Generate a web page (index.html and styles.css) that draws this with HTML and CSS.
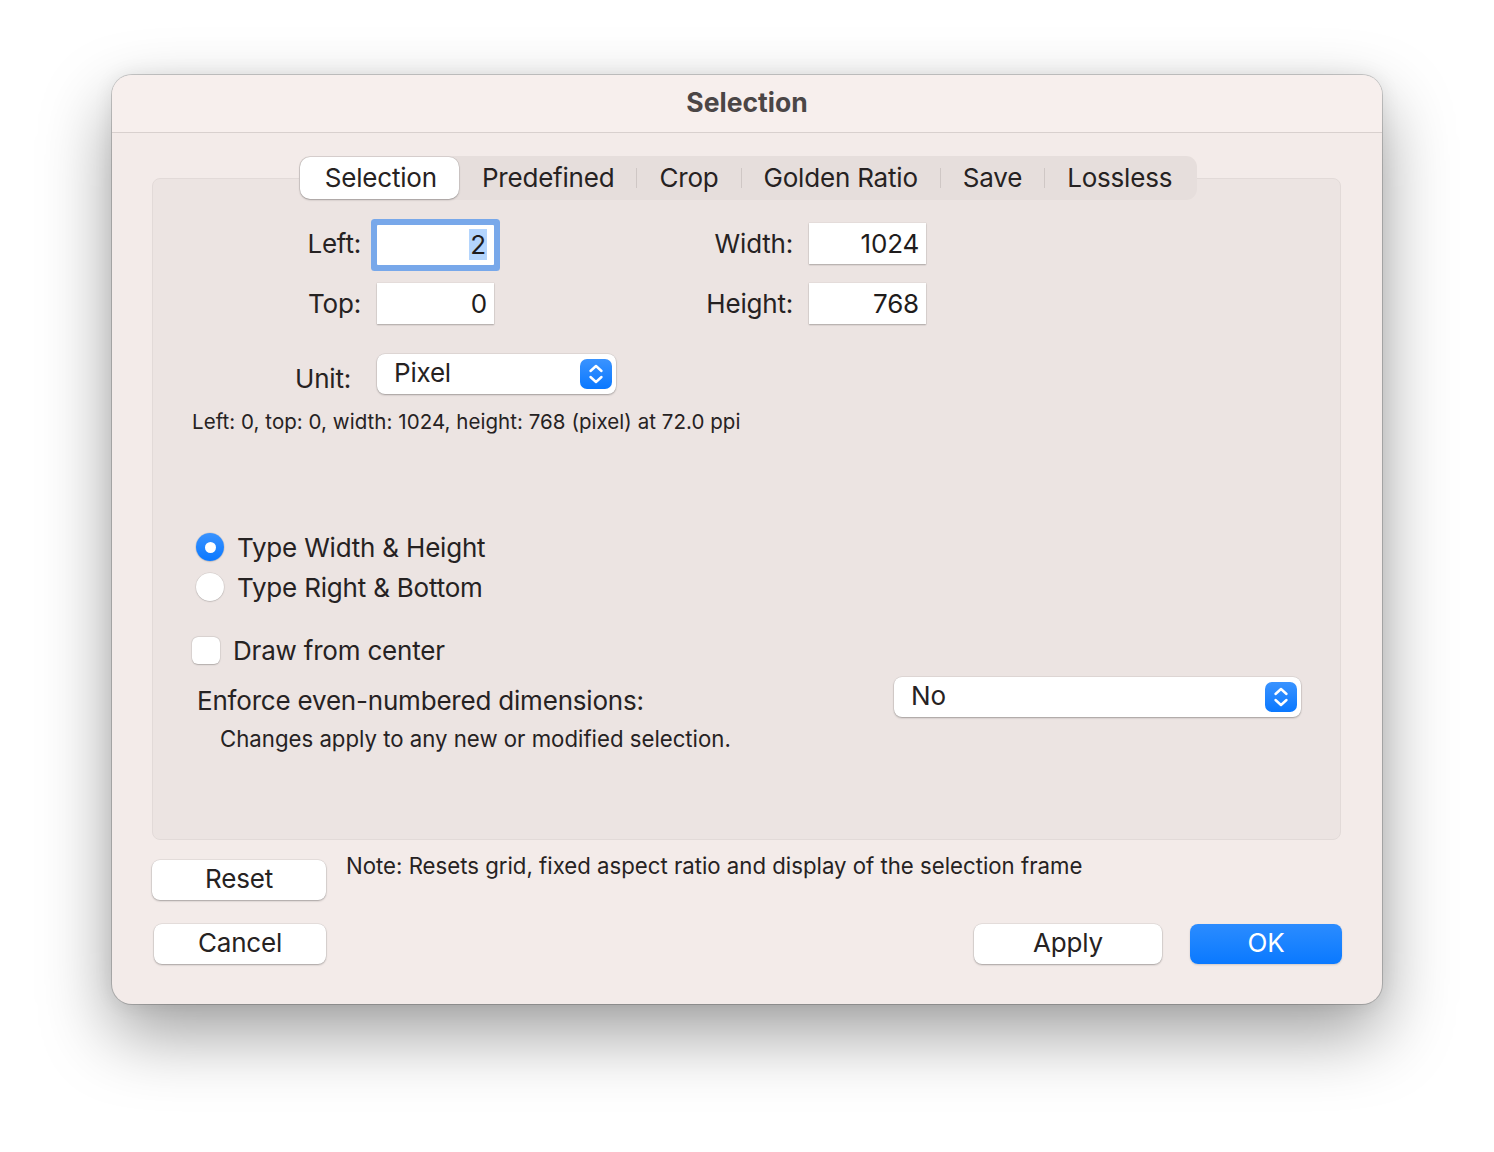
FILE: index.html
```html
<!DOCTYPE html>
<html>
<head>
<meta charset="utf-8">
<title>Selection</title>
<link rel="stylesheet" href="styles.css">
</head>
<body>
<div class="window">
  <div class="titlebar">Selection</div>
  <div class="content">
    <div class="tabs-row">
      <div class="tabs">
        <div class="tab active">Selection</div>
        <div class="tab">Predefined</div>
        <div class="sep"></div>
        <div class="tab">Crop</div>
        <div class="sep"></div>
        <div class="tab">Golden Ratio</div>
        <div class="sep"></div>
        <div class="tab">Save</div>
        <div class="sep"></div>
        <div class="tab">Lossless</div>
      </div>
    </div>
    <div class="groupbox">
      <div class="fields">
        <div class="lbl">Left:</div>
        <div class="field focused"><span class="sel">2</span></div>
        <div class="lbl">Width:</div>
        <div class="field">1024</div>
        <div class="lbl">Top:</div>
        <div class="field">0</div>
        <div class="lbl">Height:</div>
        <div class="field">768</div>
      </div>
      <div class="unit-row">
        <div class="unit-lbl">Unit:</div>
        <div class="popup unit-popup">
          <span class="popup-text">Pixel</span>
          <span class="stepper"><svg width="32" height="30" viewBox="0 0 32 30"><path d="M10.5 12 L16 7 L21.5 12" fill="none" stroke="#fff" stroke-width="2.4" stroke-linecap="round" stroke-linejoin="round"/><path d="M10.5 18 L16 23 L21.5 18" fill="none" stroke="#fff" stroke-width="2.4" stroke-linecap="round" stroke-linejoin="round"/></svg></span>
        </div>
      </div>
      <div class="info">Left: 0, top: 0, width: 1024, height: 768 (pixel) at 72.0 ppi</div>
      <div class="radios">
        <div class="radio-row"><span class="radio on"></span><span>Type Width &amp; Height</span></div>
        <div class="radio-row"><span class="radio"></span><span>Type Right &amp; Bottom</span></div>
      </div>
      <div class="check-row"><span class="checkbox"></span><span>Draw from center</span></div>
      <div class="enforce-row">
        <div class="enforce-lbl">Enforce even-numbered dimensions:</div>
        <div class="popup no-popup">
          <span class="popup-text">No</span>
          <span class="stepper"><svg width="32" height="30" viewBox="0 0 32 30"><path d="M10.5 12 L16 7 L21.5 12" fill="none" stroke="#fff" stroke-width="2.4" stroke-linecap="round" stroke-linejoin="round"/><path d="M10.5 18 L16 23 L21.5 18" fill="none" stroke="#fff" stroke-width="2.4" stroke-linecap="round" stroke-linejoin="round"/></svg></span>
        </div>
      </div>
      <div class="changes">Changes apply to any new or modified selection.</div>
    </div>
    <div class="reset-row">
      <button class="btn reset">Reset</button>
      <div class="note">Note: Resets grid, fixed aspect ratio and display of the selection frame</div>
    </div>
    <div class="action-row">
      <button class="btn cancel">Cancel</button>
      <div class="spacer"></div>
      <button class="btn apply">Apply</button>
      <button class="btn ok">OK</button>
    </div>
  </div>
</div>
</body>
</html>
```

FILE: styles.css
```css
* { box-sizing: border-box; }

body {
  margin: 0;
  background: #ffffff;
  font-family: Inter, "Noto Sans", "Liberation Sans", sans-serif;
  font-size: 26px;
  letter-spacing: -0.2px;
  color: #262222;
  width: 1494px;
  height: 1152px;
  overflow: hidden;
}

.window {
  margin: 75px 0 0 112px;
  width: 1270px;
  height: 929px;
  border-radius: 20px;
  background: #f3ebe9;
  box-shadow: 0 0 0 1px rgba(0, 0, 0, 0.18), 0 30px 70px rgba(0, 0, 0, 0.38), 0 0 20px rgba(0,0,0,0.08);
  overflow: hidden;
}

.titlebar {
  height: 58px;
  background: #f7efed;
  border-bottom: 1px solid #d8d0ce;
  display: flex;
  align-items: center;
  justify-content: center;
  font-weight: 700;
  font-size: 26.5px;
  color: #4b4646;
  letter-spacing: 0;
  padding-bottom: 3px;
}

.content {
  padding: 23px 41px 0 40px;
}

.tabs-row {
  display: flex;
  justify-content: center;
  padding-left: 3px;
  position: relative;
  z-index: 1;
}

.tabs {
  display: flex;
  align-items: center;
  height: 44px;
  background: #e6dedc;
  border-radius: 11px;
  padding: 1px 3px 1px 1px;
}

.tab {
  padding: 0 22px 2px;
  height: 42px;
  display: flex;
  align-items: center;
  color: #262222;
}

.tab.active {
  background: #ffffff;
  border-radius: 10px;
  box-shadow: 0 1px 2px rgba(0,0,0,0.25), 0 0 0 0.5px rgba(0,0,0,0.12);
  padding: 0 22px 2px 25px;
  margin-right: 1px;
}

.sep {
  width: 1px;
  height: 20px;
  background: #cfc7c5;
}

.groupbox {
  margin-top: -22px;
  height: 662px;
  background: #ece4e2;
  border: 1px solid #e2dad8;
  border-radius: 8px;
  padding: 44px 39px 0 39px;
}

.fields {
  display: grid;
  grid-template-columns: 169px 117px 283px 117px;
  grid-template-rows: 41px 41px;
  row-gap: 19px;
  column-gap: 16px;
  align-items: center;
}

.fields .field:nth-child(2) { margin-top: 2px; }

.lbl {
  text-align: right;
}

.field {
  height: 41px;
  background: #ffffff;
  box-shadow: 0 1px 1.5px rgba(0,0,0,0.25), 0 0 0 0.5px rgba(0,0,0,0.06);
  text-align: right;
  padding-right: 7px;
  line-height: 42px;
  color: #1f1c1c;
}

.field.focused {
  box-shadow: 0 0 0 6px #78a8ea;
  border-radius: 1px;
  height: 40px;
  line-height: 40px;
}

.sel {
  background: #b4d5fd;
  padding: 0 1px;
}

.unit-row {
  margin-top: 30px;
  display: flex;
  align-items: center;
  height: 40px;
}

.unit-lbl {
  width: 159px;
  text-align: right;
  margin-top: 8px;
}

.popup {
  height: 40px;
  background: #ffffff;
  border-radius: 8px;
  box-shadow: 0 1px 2px rgba(0,0,0,0.28), 0 0 0 0.5px rgba(0,0,0,0.1);
  display: flex;
  align-items: center;
  justify-content: space-between;
  padding: 0 4px 0 17px;
}

.unit-popup {
  width: 239px;
  margin-left: 26px;
}

.popup-text {
  margin-top: -3px;
}

.stepper {
  width: 32px;
  height: 30px;
  border-radius: 7px;
  background: linear-gradient(#3a93ff, #0a78ff);
  display: flex;
}

.info {
  margin-top: 16px;
  font-size: 20.5px;
  line-height: 24px;
  letter-spacing: 0.05px;
}

.radios {
  margin-top: 93px;
  margin-left: 4px;
}

.radio-row {
  display: flex;
  align-items: center;
  height: 40px;
  gap: 13px;
}

.radio {
  width: 28px;
  height: 28px;
  border-radius: 50%;
  background: #ffffff;
  box-shadow: 0 0.5px 1.5px rgba(0,0,0,0.22), 0 0 0 0.5px rgba(0,0,0,0.08);
  display: flex;
  align-items: center;
  justify-content: center;
}

.radio.on {
  background: linear-gradient(#3a93ff, #0a78ff);
}

.radio.on::after {
  content: "";
  width: 11px;
  height: 11px;
  border-radius: 50%;
  background: #ffffff;
}

.check-row {
  margin-top: 23px;
  display: flex;
  align-items: center;
  height: 40px;
  gap: 13px;
}

.checkbox {
  width: 28px;
  height: 27px;
  border-radius: 6px;
  background: #ffffff;
  box-shadow: 0 0.5px 1.5px rgba(0,0,0,0.22), 0 0 0 0.5px rgba(0,0,0,0.08);
}

.enforce-row {
  margin-top: 7px;
  display: flex;
  align-items: center;
  justify-content: space-between;
  height: 40px;
  padding-left: 5px;
}

.enforce-lbl {
  margin-top: 6px;
}

.no-popup {
  width: 407px;
}

.changes {
  margin-top: 8px;
  margin-left: 28px;
  font-size: 22.2px;
  line-height: 28px;
  letter-spacing: 0;
}

.reset-row {
  margin-top: 12px;
  display: flex;
  align-items: flex-start;
  gap: 20px;
}

.btn {
  font-family: Inter, "Noto Sans", "Liberation Sans", sans-serif;
  font-size: 26px;
  letter-spacing: -0.2px;
  height: 40px;
  border: none;
  border-radius: 8px;
  background: #ffffff;
  color: #262222;
  box-shadow: 0 1px 2px rgba(0,0,0,0.28), 0 0 0 0.5px rgba(0,0,0,0.1);
  padding: 0 0 4px 0;
}

.reset {
  width: 174px;
  margin-top: 8px;
}

.note {
  font-size: 22.2px;
  line-height: 28px;
  letter-spacing: 0;
}

.action-row {
  margin-top: 24px;
  display: flex;
  align-items: center;
}

.cancel {
  width: 172px;
  margin-left: 2px;
}

.spacer { flex: 1; }

.apply {
  width: 188px;
}

.ok {
  width: 152px;
  margin-left: 28px;
  margin-right: -1px;
  color: #ffffff;
  background: linear-gradient(#2b8cff, #0a79ff);
  box-shadow: 0 1px 2px rgba(0,0,0,0.15);
}
```
